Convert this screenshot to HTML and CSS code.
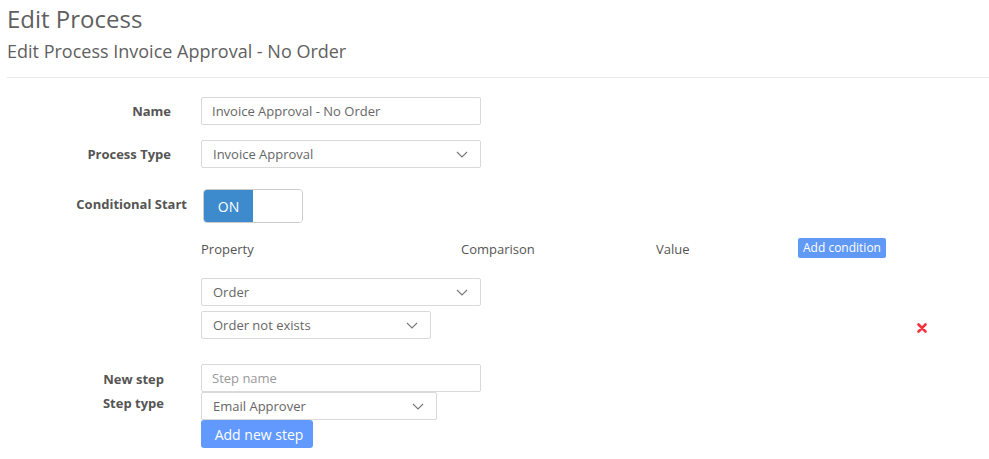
FILE: index.html
```html
<!DOCTYPE html>
<html>
<head>
<meta charset="utf-8">
<link rel="stylesheet" href="styles.css">
</head>
<body>
<div class="page">
  <h1 class="title">Edit Process</h1>
  <h2 class="subtitle">Edit Process Invoice Approval - No Order</h2>
  <hr class="divider">

  <div class="form">
    <div class="row row-center">
      <label class="lbl">Name</label>
      <div class="field"><div class="input w280">Invoice Approval - No Order</div></div>
    </div>
    <div class="row row-center">
      <label class="lbl">Process Type</label>
      <div class="field">
        <div class="select w280"><span>Invoice Approval</span><svg class="chev" viewBox="0 0 12 7" width="12" height="7"><path d="M1 1l5 5 5-5" fill="none" stroke="#777" stroke-width="1.1"/></svg></div>
      </div>
    </div>
    <div class="row row-toggle">
      <label class="lbl lbl-toggle">Conditional Start</label>
      <div class="field field-toggle">
        <div class="toggle"><span class="on">ON</span><span class="off"></span></div>
      </div>
    </div>

    <div class="cond-head">
      <span>Property</span>
      <span>Comparison</span>
      <span>Value</span>
      <span><button class="btn-small">Add condition</button></span>
    </div>

    <div class="cond-row">
      <div class="cond-selects">
        <div class="select w280"><span>Order</span><svg class="chev" viewBox="0 0 12 7" width="12" height="7"><path d="M1 1l5 5 5-5" fill="none" stroke="#777" stroke-width="1.1"/></svg></div>
        <div class="select w230"><span>Order not exists</span><svg class="chev" viewBox="0 0 12 7" width="12" height="7"><path d="M1 1l5 5 5-5" fill="none" stroke="#777" stroke-width="1.1"/></svg></div>
      </div>
      <svg class="remove" viewBox="0 0 10 10" width="10" height="10"><path d="M1.5 1.5l7 7M8.5 1.5l-7 7" stroke="#f4333f" stroke-width="2.6" stroke-linecap="round"/></svg>
    </div>

    <div class="steps">
      <div class="step-labels">
        <label class="lbl s1">New step</label>
        <label class="lbl s2">Step type</label>
      </div>
      <div class="step-fields">
        <div class="input w280 placeholder">Step name</div>
        <div class="select w236"><span>Email Approver</span><svg class="chev" viewBox="0 0 12 7" width="12" height="7"><path d="M1 1l5 5 5-5" fill="none" stroke="#777" stroke-width="1.1"/></svg></div>
        <button class="btn">Add new step</button>
      </div>
    </div>
  </div>
</div>
</body>
</html>
```

FILE: styles.css
```css
* { box-sizing: border-box; }
body {
  margin: 0;
  font-family: "Open Sans", "Liberation Sans", sans-serif;
  color: #555;
  background: #fff;
}
.page { padding: 0 0 0 7px; }
.title {
  margin: 0;
  padding-top: 4px;
  font-size: 24px;
  font-weight: 400;
  line-height: 30px;
  color: #5f5f5f;
}
.subtitle {
  margin: 5px 0 0;
  font-size: 18px;
  font-weight: 400;
  line-height: 24px;
  color: #5f5f5f;
}
.divider {
  margin: 14px 0 0;
  border: 0;
  border-top: 1px solid #eaeaea;
}
.form { padding-top: 19px; }
.row { display: flex; margin-bottom: 15px; }
.row-center { align-items: center; }
.lbl {
  width: 164px;
  text-align: right;
  font-size: 13px;
  font-weight: 700;
  color: #555;
  line-height: 18px;
}
.field { margin-left: 30px; }
.input, .select {
  height: 28px;
  border: 1px solid #d9d9d9;
  border-radius: 2px;
  font-size: 13px;
  color: #666;
  display: flex;
  align-items: center;
  padding: 0 10px;
  background: #fff;
}
.select { justify-content: space-between; padding: 0 12px 0 11px; }
.chev { display: block; }
.w280 { width: 280px; }
.w230 { width: 230px; }
.w236 { width: 236px; }
.placeholder { color: #999; }
.row-toggle { align-items: flex-start; margin-top: 21px; margin-bottom: 0; }
.lbl-toggle { width: 180px; padding-top: 6px; }
.field-toggle { margin-left: 16px; }
.toggle {
  width: 100px;
  height: 34px;
  border: 1px solid #ccc;
  border-radius: 4px;
  overflow: hidden;
  display: flex;
}
.toggle .on {
  width: 49px;
  background: #3d8bcd;
  color: #fff;
  font-size: 14px;
  display: flex;
  align-items: center;
  justify-content: center;
}
.toggle .off { flex: 1; background: #fff; }
.cond-head {
  display: grid;
  grid-template-columns: 260px 195px 142px auto;
  margin-left: 194px;
  margin-top: 14px;
  align-items: center;
  font-size: 13px;
  color: #555;
  height: 22px;
}
.cond-head > span:not(:last-child) { padding-top: 1px; }
.btn-small {
  font-family: inherit;
  font-size: 12px;
  color: #fff;
  background: #6199f7;
  border: 0;
  border-radius: 2px;
  height: 20px;
  width: 88px;
  padding: 0;
  line-height: 20px;
}
.cond-row {
  display: flex;
  align-items: flex-end;
  margin-left: 194px;
  margin-top: 19px;
}
.cond-selects { display: flex; flex-direction: column; gap: 5px; width: 280px; }
.remove { margin-left: 436px; margin-bottom: 6px; }
.steps { display: flex; margin-top: 25px; }
.step-labels { width: 157px; display: flex; flex-direction: column; }
.step-labels .lbl { width: 157px; }
.s1 { margin-top: 6px; }
.s2 { margin-top: 6px; }
.step-fields { margin-left: 37px; display: flex; flex-direction: column; }
.step-fields .select { height: 28px; }
.btn {
  font-family: inherit;
  width: 112px;
  height: 28px;
  border: 0;
  border-radius: 3px;
  background: #6199ff;
  color: #fff;
  font-size: 14px;
  padding: 0 0 0 4px;
}
```
